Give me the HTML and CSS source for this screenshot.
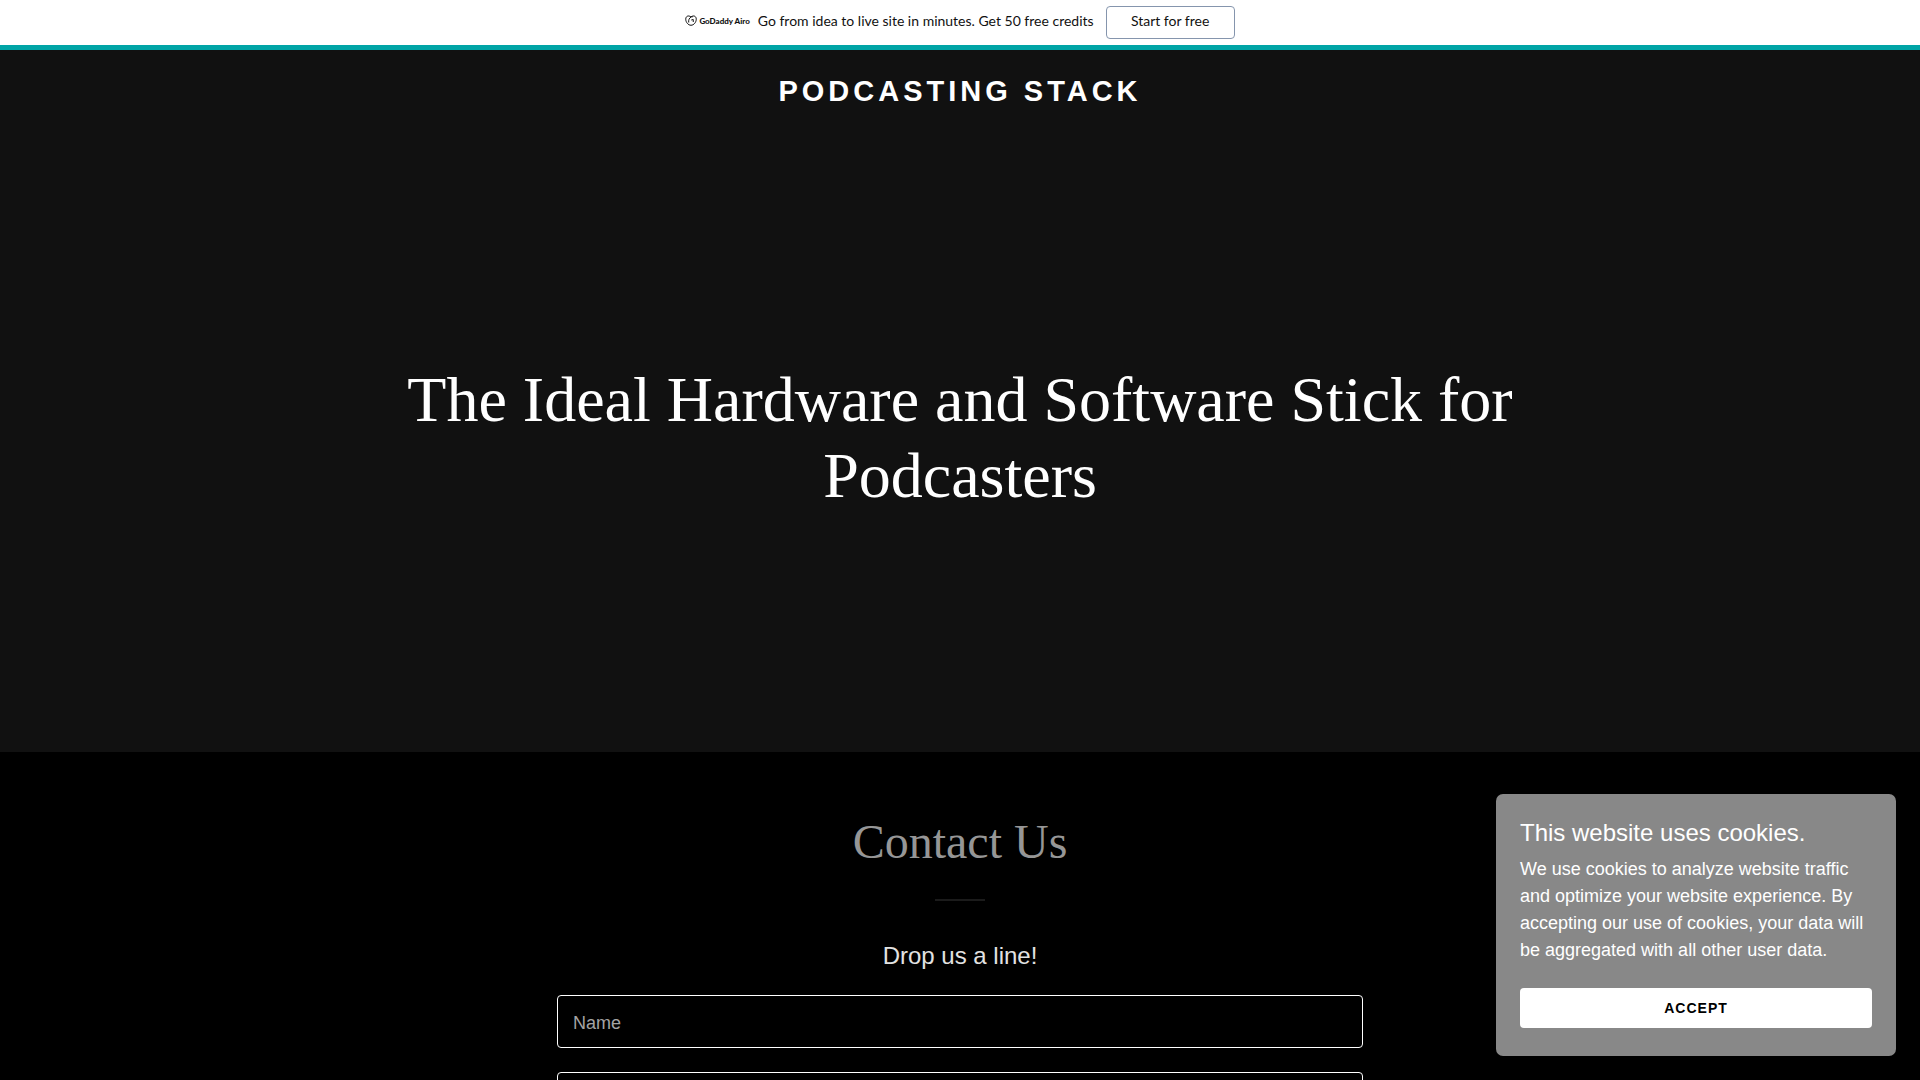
FILE: index.html
```html
<!DOCTYPE html>
<html lang="en">
<head>
  <meta charset="UTF-8" />
  <meta name="viewport" content="width=device-width, initial-scale=1" />
  <title>Podcasting Stack</title>
  <link rel="stylesheet" href="styles.css">
</head>
<body>
  <div class="promo">
    <div class="promo-logo">
      <svg class="promo-mark" viewBox="0 0 24 22" aria-hidden="true">
        <path d="M12 20.5 C6 20.5 1.5 14 1.5 8.5 C1.5 2 7 0 12 4 C17 0 22.5 2 22.5 8.5 C22.5 14 18 20.5 12 20.5 Z" />
        <path d="M7.5 15 C6.5 10 8.5 6.5 12 4 C13.5 3 14.5 3 15.5 4 M12.5 10 L16.5 9 V14" />
      </svg>
      <span>GoDaddy Airo</span>
    </div>
    <span class="promo-text">Go from idea to live site in minutes. Get 50 free credits</span>
    <button class="promo-button" type="button">Start for free</button>
  </div>

  <header class="hero">
    <a class="brand" href="#">Podcasting Stack</a>
    <div class="hero-content">
      <h1>The Ideal Hardware and Software Stick for Podcasters</h1>
    </div>
  </header>

  <main class="contact">
    <h2>Contact Us</h2>
    <hr>
    <form class="contact-form">
      <h3>Drop us a line!</h3>
      <div class="field">
        <input type="text" id="name">
        <label for="name">Name</label>
      </div>
      <div class="field">
        <input type="email" id="email">
        <label for="email">Email*</label>
      </div>
    </form>
  </main>

  <div class="cookies">
    <h4>This website uses cookies.</h4>
    <p>We use cookies to analyze website traffic and optimize your website experience. By accepting our use of cookies, your data will be aggregated with all other user data.</p>
    <button class="accept" type="button">Accept</button>
  </div>
</body>
</html>
```
FILE: styles.css
```css
* {
  box-sizing: border-box;
}

body {
  margin: 0;
  background-color: #000;
  color: #fff;
  font-family: "Liberation Sans", Arial, sans-serif;
}

h1,
h2,
h3,
h4,
p {
  margin: 0;
  font-weight: normal;
}

.promo {
  display: flex;
  align-items: center;
  justify-content: center;
  height: 50px;
  background-color: #fff;
  border-bottom: 5px solid #00a4a6;
  color: #111;
  font-family: Lato, sans-serif;
  font-size: 14px;
}

.promo-logo {
  display: flex;
  align-items: center;
  gap: 2px;
  margin-right: 8px;
  padding-bottom: 4px;
  font-size: 8px;
  font-weight: 900;
}

.promo-mark {
  width: 12px;
  height: 11px;
  fill: none;
  stroke: #111;
  stroke-width: 2;
}

.promo-text {
  padding-bottom: 4px;
}

.promo-button {
  width: 129px;
  height: 33px;
  margin-left: 12px;
  padding: 0 0 4px;
  background-color: #fff;
  border: 1px solid #8595ad;
  border-radius: 4px;
  color: #111;
  font: inherit;
  cursor: pointer;
}

.hero {
  display: flex;
  flex-direction: column;
  align-items: center;
  min-height: 702px;
  padding: 24px;
  background-color: #111;
  text-align: center;
}

.brand {
  color: #fff;
  font-size: 29px;
  font-weight: bold;
  line-height: 34px;
  letter-spacing: 4px;
  text-decoration: none;
  text-transform: uppercase;
}

.hero-content {
  display: flex;
  flex: 1;
  align-items: center;
  max-width: 1160px;
  padding-top: 40px;
}

.hero h1 {
  font-family: "Liberation Serif", "Times New Roman", serif;
  font-size: 64px;
  line-height: 76px;
}

.contact {
  padding: 56px 24px;
  text-align: center;
}

.contact h2 {
  color: #969696;
  font-family: "Liberation Serif", "Times New Roman", serif;
  font-size: 48px;
  line-height: 68px;
}

.contact hr {
  width: 50px;
  height: 2px;
  margin: 23px auto 40px;
  border: 0;
  background-color: #1b1b1b;
}

.contact-form {
  max-width: 806px;
  margin: 0 auto;
}

.contact-form h3 {
  margin-bottom: 24px;
  color: #e2e2e2;
  font-size: 24px;
  line-height: 30px;
}

.field {
  position: relative;
  margin-bottom: 24px;
}

.field input {
  display: block;
  width: 100%;
  height: 53px;
  padding: 20px 16px 8px;
  background-color: #000;
  border: 1px solid #fff;
  border-radius: 4px;
  color: #e2e2e2;
  font: inherit;
  font-size: 18px;
}

.field label {
  position: absolute;
  top: 16px;
  left: 16px;
  color: #a4a4a4;
  font-size: 18px;
  line-height: 24px;
  pointer-events: none;
}

.cookies {
  position: fixed;
  right: 24px;
  bottom: 24px;
  width: 400px;
  padding: 24px 24px 28px;
  background-color: #888;
  border-radius: 7px;
}

.cookies h4 {
  margin-bottom: 8px;
  font-size: 24px;
  line-height: 30px;
}

.cookies p {
  margin-bottom: 24px;
  font-size: 18px;
  line-height: 27px;
}

.accept {
  display: block;
  width: 100%;
  height: 40px;
  background-color: #fff;
  border: 0;
  border-radius: 4px;
  color: #000;
  font-family: inherit;
  font-size: 14px;
  font-weight: bold;
  letter-spacing: 1px;
  text-transform: uppercase;
  cursor: pointer;
}
```
